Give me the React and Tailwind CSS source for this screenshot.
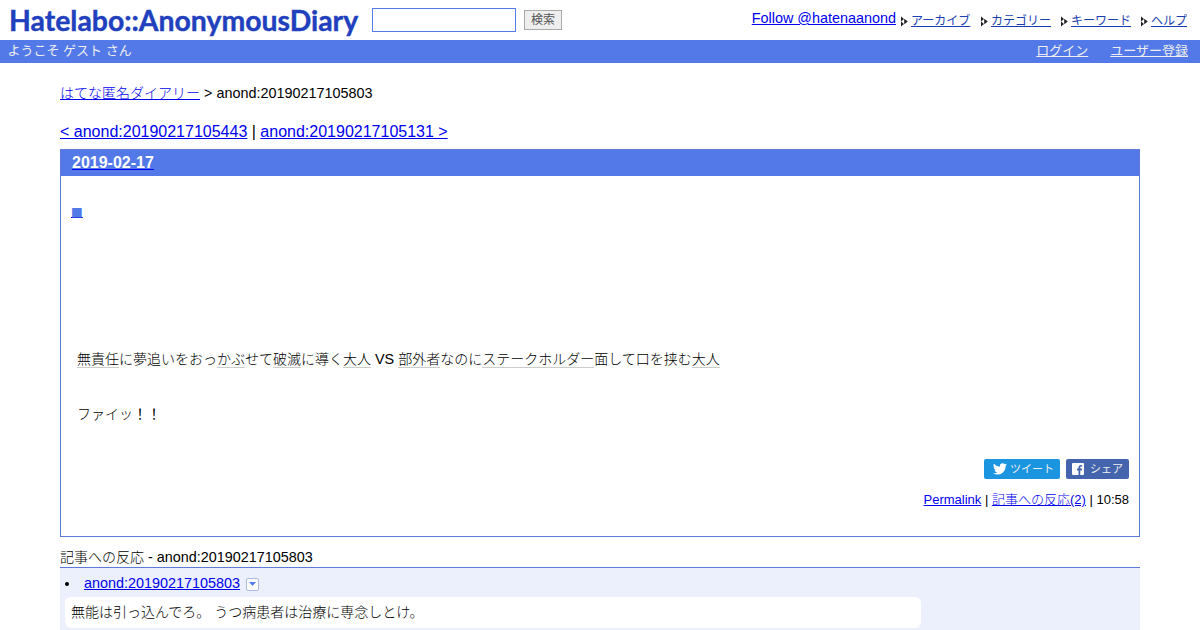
import React from "react";

function Arrow() {
  return (
    <svg width="7" height="11" viewBox="0 0 7 11" className="inline-block mr-[3px] align-[-2px]">
      <path d="M0 0.5 L3 3 L0 5.5Z M3.2 2.8 L6.8 5.5 L3.2 8.2 Z M0 5.5 L3 8 L0 10.5Z" fill="#222" />
    </svg>
  );
}

function J({ children, className = "" }) {
  return <span className={"text-[14px] font-light " + className}>{children}</span>;
}

function K({ children }) {
  return <span className="text-[14px] font-light border-b border-[#cccccc]">{children}</span>;
}

export default function App() {
  return (
    <div className="font-['Liberation_Sans','Noto_Sans_CJK_JP',sans-serif] text-black text-[14.4px] h-[630px] overflow-hidden bg-white">
      <header className="h-[40px] flex items-start justify-between">
        <div className="flex items-start">
          <div className="ml-[9px] mt-[1px] w-[350px] h-[38px] leading-[38px] font-['Lato',sans-serif] font-bold text-[28.4px] text-[#2140bd] whitespace-nowrap [-webkit-text-stroke:0.4px_#2140bd]">
            Hatelabo::AnonymousDiary
          </div>
          <input className="ml-[13px] mt-[8px] w-[144px] h-[24px] border border-[#5279e7] bg-white" />
          <button className="ml-[8px] mt-[10px] w-[38px] h-[20px] border border-[#aaaaaa] bg-[#eeeeee] text-[#555555] text-[12px] leading-[18px]">検索</button>
        </div>
        <div className="flex items-center mt-[8px] mr-[13px] h-[20px] whitespace-nowrap">
          <a className="text-[#0000ee] underline text-[14.4px] leading-[18px]">Follow @hatenaanond</a>
          <div className="flex ml-[5px] text-[12px] mt-[5px]">
            <span className="w-[80px]"><Arrow /><a className="text-[#1b3eb0] underline">アーカイブ</a></span>
            <span className="w-[80px]"><Arrow /><a className="text-[#1b3eb0] underline">カテゴリー</a></span>
            <span className="w-[80px]"><Arrow /><a className="text-[#1b3eb0] underline">キーワード</a></span>
            <span><Arrow /><a className="text-[#1b3eb0] underline">ヘルプ</a></span>
          </div>
        </div>
      </header>
      <div className="h-[23px] bg-[#5279e7] text-[13px] leading-[22px] flex justify-between pl-[8px] pr-[12px]">
        <span className="text-[#eeeeee] -ml-[0.5px]">ようこそ ゲスト さん</span>
        <span className="flex gap-[22px] text-[#eeeeee]">
          <a className="underline">ログイン</a>
          <a className="underline">ユーザー登録</a>
        </span>
      </div>
      <main className="px-[60px]">
        <div className="mt-[21px] leading-[18px]">
          <a className="text-[#0000ee] underline"><J>はてな匿名ダイアリー</J></a> &gt; anond:20190217105803
        </div>
        <div className="mt-[20px] text-[16px] leading-[20px]">
          <a className="text-[#0000ee] underline">&lt; anond:20190217105443</a> | <a className="text-[#0000ee] underline">anond:20190217105131 &gt;</a>
        </div>
        <section className="mt-[7px] h-[388px] border border-[#5f7bd8] flex flex-col">
          <h3 className="h-[26px] bg-[#5279e7] pl-[11px] text-[16px] font-bold leading-[26px]">
            <a className="text-white underline decoration-[#0000ee]">2019-02-17</a>
          </h3>
          <div className="pl-[10px] mt-[24px] h-[22px] leading-[22px]">
            <a className="text-[#5279e7] underline decoration-[#0000ee] font-['DejaVu_Sans',sans-serif] text-[12.5px]">■</a>
          </div>
          <p className="ml-[16px] mt-[125px] leading-[24px]">
            <K>無責任</K><J>に夢追いをおっ</J><K>かぶ</K><J>せて</J><K>破滅</K><J>に導く</J><K>大人</K> VS <K>部外者</K><J>なのに</J><K>ステークホルダー</K><J>面して口を挟む</J><K>大人</K>
          </p>
          <p className="ml-[16px] mt-[31px] leading-[24px]"><J>ファイッ</J><span className="text-[14px]">！！</span></p>
          <div className="mt-[33px] mr-[10px] flex justify-end gap-[6px]">
            <a className="w-[76px] h-[20px] rounded-[2px] bg-[#1b95e0] text-[#eeeeee] text-[11px] flex items-center pl-[9px]">
              <svg width="14" height="12" viewBox="0 0 24 20" fill="#fff" className="mr-[3px]"><path d="M24 2.4a9.8 9.8 0 0 1-2.8.8A5 5 0 0 0 23.3.5a9.8 9.8 0 0 1-3.1 1.2A4.9 4.9 0 0 0 11.8 6 13.9 13.9 0 0 1 1.7 1a4.9 4.9 0 0 0 1.5 6.6 4.9 4.9 0 0 1-2.2-.6v.1a4.9 4.9 0 0 0 3.9 4.8 4.9 4.9 0 0 1-2.2.1 4.9 4.9 0 0 0 4.6 3.4A9.9 9.9 0 0 1 0 17.4 13.9 13.9 0 0 0 7.5 19.6c9.1 0 14-7.5 14-14v-.6A10 10 0 0 0 24 2.4z"/></svg>
              ツイート
            </a>
            <a className="w-[63px] h-[20px] rounded-[2px] bg-[#4465ad] text-[#eeeeee] text-[11px] flex items-center pl-[6px]">
              <svg width="12" height="12" viewBox="0 0 12 12" className="mr-[6px]"><rect width="12" height="12" rx="1" fill="#fff"/><path d="M8.3 12V7.4h1.5l.2-1.8H8.3V4.5c0-.5.2-.9.9-.9h1V2a12 12 0 0 0-1.4-.1c-1.4 0-2.3.9-2.3 2.4v1.3H5v1.8h1.5V12z" fill="#4465ad"/></svg>
              シェア
            </a>
          </div>
          <div className="mt-[12px] mr-[10px] text-right text-[13px] leading-[18px]">
            <a className="text-[#0000ee] underline">Permalink</a> | <a className="text-[#0000ee] underline"><span className="font-light">記事への反応</span>(2)</a> | 10:58
          </div>
        </section>
        <div className="mt-[9px] h-[22px] leading-[22px] border-b border-[#5f7bd8]"><J>記事への反応</J> - anond:20190217105803</div>
        <div className="bg-[#ebf0fc] h-[80px] pl-[5px] pt-[6px]">
          <div className="flex items-center h-[20px]">
            <span className="w-[4px] h-[4px] rounded-full bg-black"></span>
            <a className="ml-[15px] text-[#0000ee] underline">anond:20190217105803</a>
            <span className="ml-[6px] w-[13px] h-[13px] border border-[#aabbdd] rounded-[2px] bg-white flex items-center justify-center">
              <svg width="7" height="4" viewBox="0 0 7 4"><path d="M0 0h7L3.5 4z" fill="#5279e7"/></svg>
            </span>
          </div>
          <div className="mt-[3px] w-[856px] h-[31px] bg-white rounded-[6px] pl-[6px] leading-[30px]"><J>無能は引っ込んでろ。 うつ病患者は治療に専念しとけ。</J></div>
        </div>
      </main>
    </div>
  );
}
